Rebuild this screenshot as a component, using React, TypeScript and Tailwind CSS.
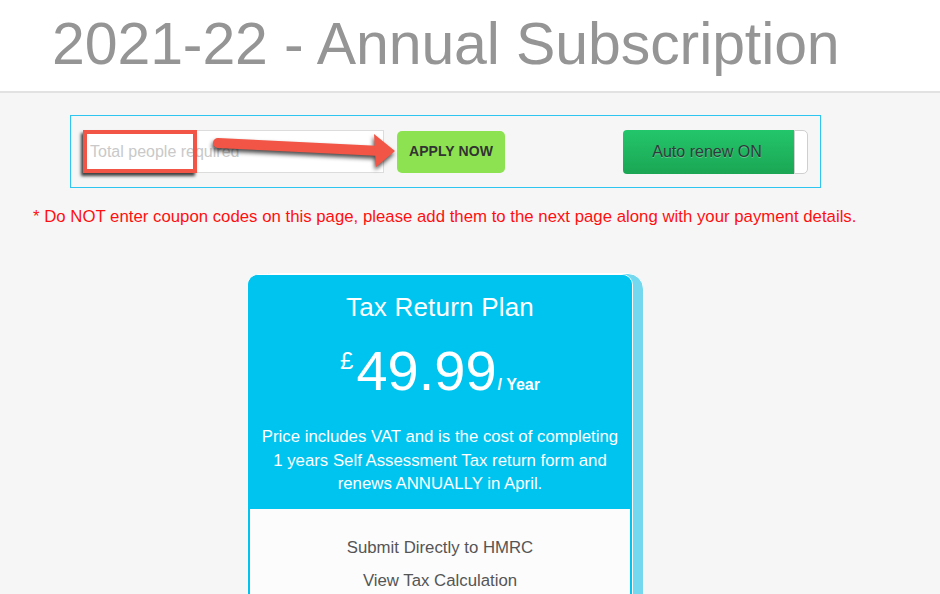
export default function App() {
  return (
    <div className="h-[594px] w-[940px] overflow-hidden bg-[#f6f6f6] font-['Liberation_Sans',Arial,sans-serif]">
      <div className="h-[93px] bg-white border-b-2 border-[#e2e2e2] pl-[52px] pt-[15px]">
        <h1 className="text-[59px] leading-none text-[#959595] tracking-[-0.1px] whitespace-nowrap">
          2021-22 - Annual Subscription
        </h1>
      </div>

      <div className="relative mt-[22px] ml-[70px] w-[751px] h-[73px] border border-[#2ec5f0] px-[12px] flex items-center justify-between">
        <div className="flex items-center gap-[13px]">
          <div className="w-[301px] h-[43px] bg-white border border-[#dcdcdc] flex items-center pl-[6px]">
            <span className="text-[16px] text-[#c9c9c9] whitespace-nowrap">Total people required</span>
          </div>
          <button className="w-[108px] h-[42px] rounded-[5px] bg-[#8ce250] text-[14px] font-bold text-[#333] tracking-[0.1px]">
            APPLY NOW
          </button>
        </div>
        <div className="flex h-[44px] w-[185px]">
          <div className="flex-1 rounded-l-[4px] bg-gradient-to-b from-[#23c66b] to-[#1ba654] flex items-center justify-center text-[16px] text-[#2f3a3a] pr-[3px] [text-shadow:0_1px_0_rgba(255,255,255,0.3)]">
            Auto renew ON
          </div>
          <div className="w-[14px] bg-white border border-[#cfcfcf] rounded-r-[5px]" />
        </div>

        {/* annotation: red box */}
        <div className="absolute left-[12px] top-[14px] w-[114px] h-[43px] border-[4px] border-[#f25545] shadow-[-2px_3px_3px_rgba(0,0,0,0.75)]" />
        {/* annotation: arrow */}
        <svg
          className="absolute left-[130px] top-[10px] overflow-visible"
          width="200"
          height="50"
          style={{ filter: "drop-shadow(-1px 3px 2px rgba(0,0,0,0.7))" }}
        >
          <line x1="17" y1="17" x2="180" y2="25" stroke="#f25545" strokeWidth="10" strokeLinecap="round" />
          <polygon points="173,8 194,25 175,41 " fill="#f25545" />
        </svg>
      </div>

      <p className="mt-[20px] ml-[33px] text-[16.8px] leading-[18px] text-[#ff1010] whitespace-nowrap">
        * Do NOT enter coupon codes on this page, please add them to the next page along with your payment details.
      </p>

      <div className="relative mt-[48px] ml-[247px] w-[397px] h-[400px]">
        <div className="absolute left-[12px] right-0 top-[-1px] bottom-0 rounded-tr-[16px] rounded-tl-[12px] bg-[#74d9ef] border border-white" />
        <div className="relative w-[386px] rounded-t-[11px] bg-[#00c4f0] border border-white">
          <div className="border-x-2 border-[#00c4f0] rounded-t-[10px] overflow-hidden">
            <div className="bg-[#00c4f0] text-white text-center pt-[17px] pb-[13px]">
              <div className="text-[26px] leading-[30px] tracking-[0.2px]">Tax Return Plan</div>
              <div className="mt-[21px] flex justify-center items-start h-[57px]">
                <span className="text-[24px] leading-none mt-[6px] mr-[3px]">£</span>
                <span className="text-[56px] leading-[56px]">49.99</span>
                <span className="text-[16px] font-bold leading-none self-end mb-[7px] ml-[1px]">/ Year</span>
              </div>
              <div className="mt-[25px] text-[16.8px] leading-[23.5px] px-[6px]">
                Price includes VAT and is the cost of completing
                <br />1 years Self Assessment Tax return form and
                <br />renews ANNUALLY in April.
              </div>
            </div>
            <div className="bg-[#fcfcfc] text-center text-[16.8px] text-[#555] pt-[28px] h-[200px]">
              <div className="leading-[22px]">Submit Directly to HMRC</div>
              <div className="leading-[22px] mt-[11px]">View Tax Calculation</div>
            </div>
          </div>
        </div>
      </div>
    </div>
  );
}
